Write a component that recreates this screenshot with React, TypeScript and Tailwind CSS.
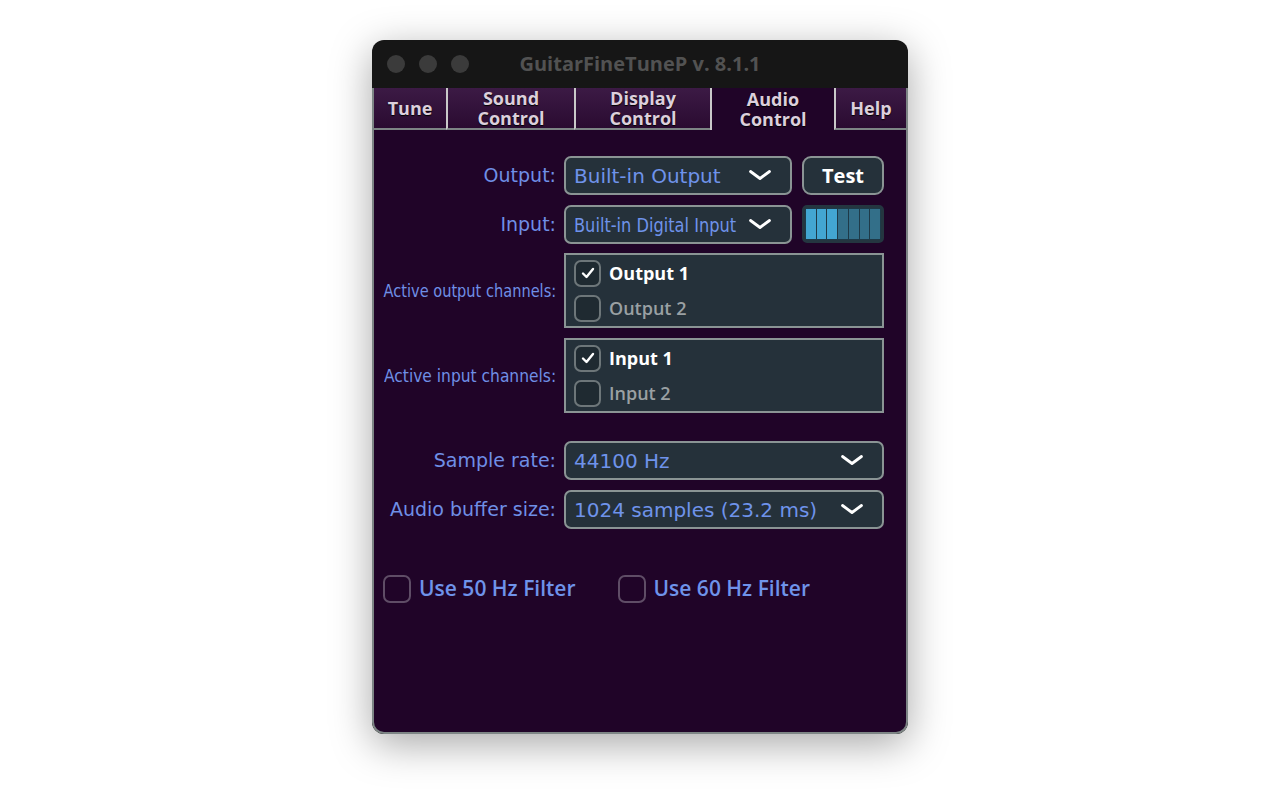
import React from "react";

const ui = { fontFamily: "'Open Sans', 'Noto Sans', sans-serif" };
const dv = { fontFamily: "'DejaVu Sans', 'Noto Sans', sans-serif" };

function Chevron() {
  return (
    <svg width="24" height="13" viewBox="0 0 24 13" className="shrink-0">
      <path d="M2.5 2.5 L12 9.5 L21.5 2.5" fill="none" stroke="#ffffff" strokeWidth="2.8" strokeLinecap="round" strokeLinejoin="round" />
    </svg>
  );
}

function Check() {
  return (
    <svg width="14" height="12" viewBox="0 0 14 12">
      <path d="M2 6.5 L5.5 10 L12 2" fill="none" stroke="#ffffff" strokeWidth="2.4" strokeLinecap="round" strokeLinejoin="round" />
    </svg>
  );
}

function Select({ value, squeeze }: { value: string; squeeze?: boolean }) {
  return (
    <div className="flex h-[39px] items-center justify-between rounded-[7px] border-2 border-[#8a9494] bg-[#25313a] pl-2 pr-[18px]">
      {squeeze ? (
        <div className="w-[162px]">
          <span className="inline-block origin-left scale-x-[0.81] whitespace-nowrap text-[20px] text-[#6f93ea]" style={dv}>
            {value}
          </span>
        </div>
      ) : (
        <span className="whitespace-nowrap text-[20px] text-[#6f93ea]" style={dv}>
          {value}
        </span>
      )}
      <Chevron />
    </div>
  );
}

function Label({ text, squeeze }: { text: string; squeeze?: string }) {
  return (
    <div className="flex items-center justify-end">
      {squeeze ? (
        <span className={`inline-block origin-right whitespace-nowrap text-[18px] text-[#6f8fe6] ${squeeze}`} style={dv}>
          {text}
        </span>
      ) : (
        <span className="whitespace-nowrap text-[19px] text-[#6f8fe6]" style={dv}>
          {text}
        </span>
      )}
    </div>
  );
}

function ChannelBox({ items }: { items: { name: string; on: boolean }[] }) {
  return (
    <div className="flex h-[75px] flex-col justify-center gap-[8px] border-2 border-[#8a9494] bg-[#25313a] pl-2">
      {items.map((it) => (
        <div key={it.name} className="flex items-center gap-2">
          <div className="flex h-[27px] w-[27px] items-center justify-center rounded-[7px] border-2 border-[#6d7679] bg-[#1f2a31]">
            {it.on && <Check />}
          </div>
          <span
            className={it.on ? "text-[18px] font-bold text-white" : "text-[18px] font-semibold text-[#9aa0a3]"}
            style={ui}
          >
            {it.name}
          </span>
        </div>
      ))}
    </div>
  );
}

const tabs = [
  { l1: "Tune", w: "w-[72px]" },
  { l1: "Sound", l2: "Control", w: "w-[128px]" },
  { l1: "Display", l2: "Control", w: "w-[136px]" },
  { l1: "Audio", l2: "Control", w: "w-[124px]", active: true },
  { l1: "Help", w: "flex-1" },
];

export default function App() {
  return (
    <div className="flex h-[800px] w-full justify-center bg-white pt-[40px]" style={ui}>
      <div className="flex h-[694px] w-[536px] flex-col overflow-hidden rounded-[12px] bg-[#161616] shadow-[0_10px_40px_rgba(0,0,0,0.35)]">
        {/* title bar */}
        <div className="relative flex h-[48px] shrink-0 items-center justify-center">
          <div className="absolute left-[15px] top-[15px] flex gap-[14px]">
            <div className="h-[18px] w-[18px] rounded-full bg-[#3b3b3b]" />
            <div className="h-[18px] w-[18px] rounded-full bg-[#3b3b3b]" />
            <div className="h-[18px] w-[18px] rounded-full bg-[#3b3b3b]" />
          </div>
          <span className="text-[20px] font-bold text-[#525252]">GuitarFineTuneP v. 8.1.1</span>
        </div>

        {/* tabs */}
        <div className="flex h-[42px] shrink-0 border-l-2 border-r-2 border-[#7d8585] bg-[#200428]">
          {tabs.map((t, i) => (
            <div
              key={t.l1}
              className={`${t.w} flex items-center justify-center ${
                t.active
                  ? "bg-[#200428]"
                  : "border-b-2 border-[#7d8585] bg-gradient-to-b from-[#3c1a45] to-[#2a0b31]"
              } ${i > 0 ? "border-l-2 border-l-[#c9c9c9]" : ""}`}
            >
              <span className="block text-center text-[18px] font-bold leading-[20px] text-[#dccfdc] [text-shadow:0_1px_1px_#000]">
                {t.l1}
                {t.l2 && (
                  <>
                    <br />
                    {t.l2}
                  </>
                )}
              </span>
            </div>
          ))}
        </div>

        {/* content */}
        <div className="flex flex-1 flex-col rounded-b-[12px] border-2 border-t-0 border-[#7d8585] bg-[#200428] pl-[11px] pt-[26px]">
          <div className="grid grid-cols-[171px_320px] gap-x-2">
            <Label text="Output:" />
            <div className="flex gap-[10px]">
              <div className="w-[228px]">
                <Select value="Built-in Output" />
              </div>
              <div className="flex h-[39px] w-[82px] items-center justify-center rounded-[9px] border-2 border-[#8a9494] bg-[#25313a] text-[20px] font-bold text-white">
                Test
              </div>
            </div>

            <div className="col-span-2 h-[10px]" />
            <Label text="Input:" />
            <div className="flex gap-[10px]">
              <div className="w-[228px]">
                <Select value="Built-in Digital Input" squeeze />
              </div>
              <div className="flex h-[38px] w-[82px] gap-[1px] rounded-[5px] border-[3px] border-[#243640] bg-[#1e3a48] p-[1px]">
                {[0, 1, 2, 3, 4, 5, 6].map((i) => (
                  <div key={i} className={i < 3 ? "flex-1 bg-[#43a6d2]" : "flex-1 bg-[#336f89]"} />
                ))}
              </div>
            </div>

            <div className="col-span-2 h-[9px]" />
            <Label text="Active output channels:" squeeze="scale-x-[0.81]" />
            <ChannelBox items={[{ name: "Output 1", on: true }, { name: "Output 2", on: false }]} />

            <div className="col-span-2 h-[10px]" />
            <Label text="Active input channels:" squeeze="scale-x-[0.86]" />
            <ChannelBox items={[{ name: "Input 1", on: true }, { name: "Input 2", on: false }]} />

            <div className="col-span-2 h-[28px]" />
            <Label text="Sample rate:" />
            <Select value="44100 Hz" />

            <div className="col-span-2 h-[10px]" />
            <Label text="Audio buffer size:" />
            <Select value="1024 samples (23.2 ms)" />
          </div>

          <div className="-ml-[2px] mt-[44px] flex items-center">
            <div className="flex items-center gap-2">
              <div className="h-[28px] w-[28px] rounded-[7px] border-2 border-[#5f4d66]" />
              <span className="text-[21px] font-semibold text-[#6f93ea]">Use 50 Hz Filter</span>
            </div>
            <div className="ml-[42px] flex items-center gap-2">
              <div className="h-[28px] w-[28px] rounded-[7px] border-2 border-[#5f4d66]" />
              <span className="text-[21px] font-semibold text-[#6f93ea]">Use 60 Hz Filter</span>
            </div>
          </div>
        </div>
      </div>
    </div>
  );
}
